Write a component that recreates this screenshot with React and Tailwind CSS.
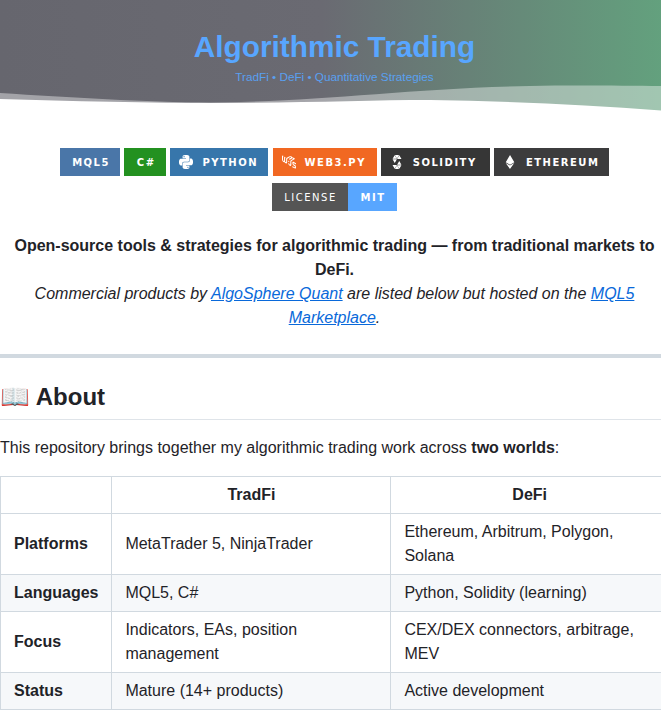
import React from "react";
import { SiPython, SiWeb3Dotjs, SiSolidity, SiEthereum } from "react-icons/si";

const Badge = ({ icon: Icon, label, color }) => (
  <span className={`flex h-7 items-center gap-[9px] pt-px text-[10px] font-bold tracking-[1.5px] text-white ${Icon ? "pl-[9px]" : "justify-center pl-[2px]"} ${color}`}>
    {Icon && <Icon className="-mt-px h-[14px] w-[14px]" />}
    {label}
  </span>
);

const rows = [
  ["Platforms", "MetaTrader 5, NinjaTrader", "Ethereum, Arbitrum, Polygon, Solana"],
  ["Languages", "MQL5, C#", "Python, Solidity (learning)"],
  ["Focus", "Indicators, EAs, position management", "CEX/DEX connectors, arbitrage, MEV"],
  ["Status", "Mature (14+ products)", "Active development"],
];

export default function App() {
  return (
    <div className="h-[713px] w-[661px] overflow-hidden bg-white">
      <div className="w-[669px] text-[16px] leading-6 text-[#1f2328] font-['Liberation_Sans',sans-serif]">
        <header className="relative h-[125px] bg-[linear-gradient(90deg,#66666e_0%,#6a6a72_48%,#63a27e_100%)]">
          <svg className="absolute inset-0" width="669" height="125" viewBox="0 0 669 125">
            <path d="M0 93 C80 98 170 104 240 102 C330 100 420 88 530 86 C580 85 630 86 669 86 V125 H0 Z" fill="#fff" fillOpacity="0.4" />
            <path d="M0 99 C70 101 150 103 220 103 C300 103 370 100 430 100 C510 101 590 105 669 111 V125 H0 Z" fill="#fff" />
          </svg>
          <div className="relative flex flex-col items-center pt-[28px] text-[#58a6ff]">
            <h1 className="text-[29.8px] leading-[38px] font-bold">Algorithmic Trading</h1>
            <p className="mt-[3px] text-[11.75px] leading-[16px] opacity-90">TradFi • DeFi • Quantitative Strategies</p>
          </div>
        </header>

        <div className="mt-[23px] flex flex-wrap justify-center gap-x-[4.2px] gap-y-[7px] font-['DejaVu_Sans',sans-serif]">
          <div className="w-[60px]"><Badge label="MQL5" color="bg-[#4a76a8]" /></div>
          <div className="w-[42px]"><Badge label="C#" color="bg-[#239120]" /></div>
          <div className="w-[98px]"><Badge icon={SiPython} label="PYTHON" color="bg-[#3776ab]" /></div>
          <div className="w-[104px]"><Badge icon={SiWeb3Dotjs} label="WEB3.PY" color="bg-[#f16822]" /></div>
          <div className="w-[109px]"><Badge icon={SiSolidity} label="SOLIDITY" color="bg-[#363636]" /></div>
          <div className="w-[115px]"><Badge icon={SiEthereum} label="ETHEREUM" color="bg-[#3c3c3d]" /></div>
          <span className="flex h-7 text-[10px] tracking-[1.5px] text-white">
            <span className="flex w-[76px] items-center justify-center bg-[#555] pt-px pl-[1px] font-normal">LICENSE</span>
            <span className="flex w-[49px] items-center justify-center bg-[#58a6ff] pt-px pl-[1px] font-bold">MIT</span>
          </span>
        </div>

        <div className="mt-[23px] text-center">
          <p className="font-bold">Open-source tools &amp; strategies for algorithmic trading — from traditional markets to DeFi.</p>
          <p className="italic">
            Commercial products by <a className="text-[#0969da] underline">AlgoSphere Quant</a> are listed below but hosted on the <a className="text-[#0969da] underline">MQL5 Marketplace</a>.
          </p>
        </div>

        <hr className="mt-[24px] h-1 border-0 bg-[#d1d9e0]" />

        <h2 className="mt-[24px] border-b border-[#d1d9e0b3] pb-[7px] text-[24px] leading-[30px] font-bold">📖 About</h2>
        <p className="mt-4">This repository brings together my algorithmic trading work across <strong>two worlds</strong>:</p>

        <table className="mt-4 w-full table-fixed border-collapse">
          <colgroup>
            <col className="w-[111.4px]" />
            <col className="w-[279px]" />
            <col />
          </colgroup>
          <thead>
            <tr>
              <th className="border border-[#d1d9e0] px-[13px] py-[6px]"></th>
              <th className="border border-[#d1d9e0] px-[13px] py-[6px] font-bold">TradFi</th>
              <th className="border border-[#d1d9e0] px-[13px] py-[6px] font-bold">DeFi</th>
            </tr>
          </thead>
          <tbody>
            {rows.map((r, i) => (
              <tr key={r[0]} className={i % 2 === 1 ? "bg-[#f6f8fa]" : "bg-white"}>
                <td className="border border-[#d1d9e0] px-[13px] py-[6px] font-bold">{r[0]}</td>
                <td className="border border-[#d1d9e0] px-[13px] py-[6px]">{r[1]}</td>
                <td className="border border-[#d1d9e0] px-[13px] py-[6px]">{r[2]}</td>
              </tr>
            ))}
          </tbody>
        </table>
      </div>
    </div>
  );
}
